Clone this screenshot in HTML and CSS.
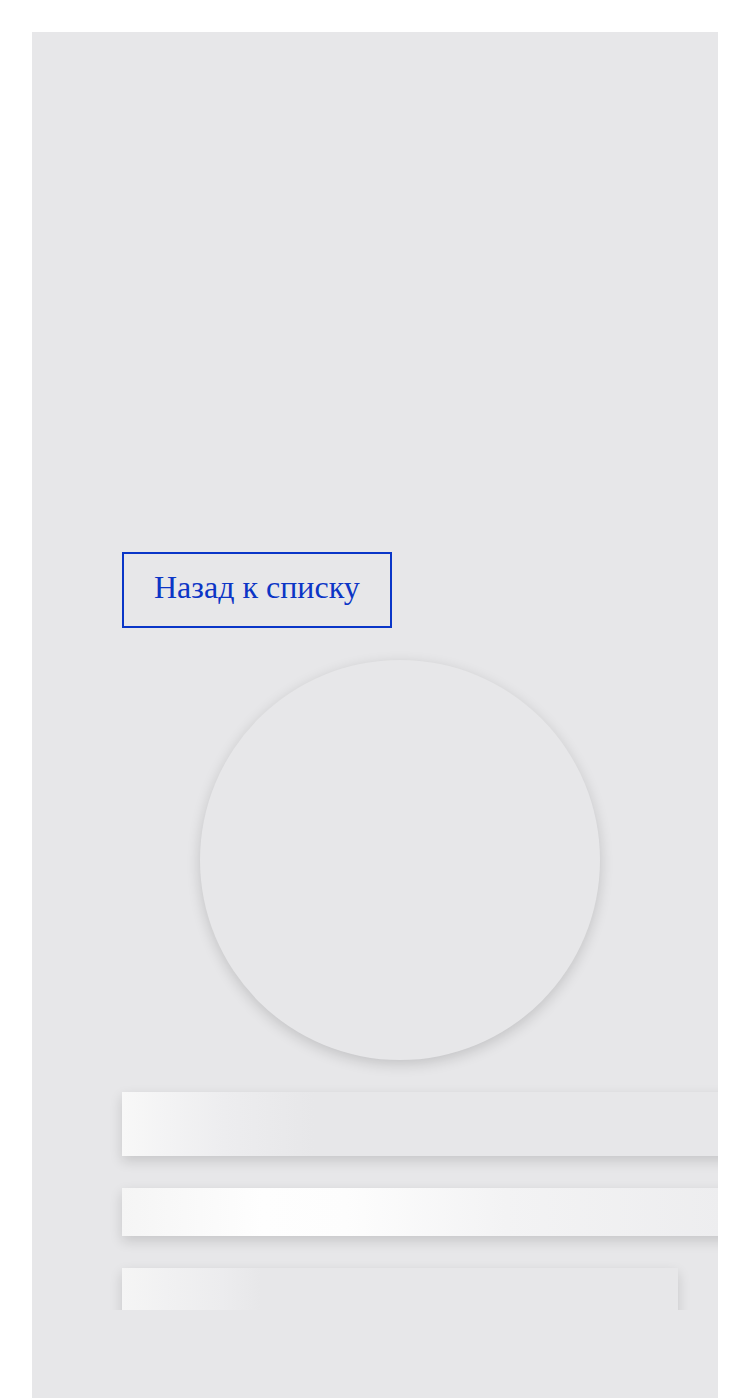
FILE: index.html
```html
<!DOCTYPE html>
<html lang="ru">
<head>
  <meta charset="UTF-8" />
  <meta name="viewport" content="width=device-width, initial-scale=1.0" />
  <title>Загрузка</title>
  <link rel="stylesheet" href="styles.css">
</head>
<body>

<div class="panel">
  <div class="viewport">
    <div class="content">
      <a class="back-link" href="#">Назад к списку</a>

      <div class="avatar"></div>

      <div class="bar bar-title"></div>
      <div class="bar bar-subtitle"></div>
      <div class="bar bar-text"></div>
    </div>
  </div>
</div>

</body>
</html>
```

FILE: styles.css
```css
*,
*::before,
*::after {
  box-sizing: border-box;
  margin: 0;
  padding: 0;
}

body {
  font-family: "Liberation Serif", "Times New Roman", serif;
  background-color: #fff;
  padding: 32px 32px 0 32px;
}

.panel {
  width: 686px;
  height: 1366px;
  background-color: #e7e7e9;
}

.viewport {
  height: 1278px;
  overflow: hidden;
}

.content {
  padding: 520px 40px 0 90px;
  display: flex;
  flex-direction: column;
  align-items: flex-start;
  gap: 32px;
}

.back-link {
  display: inline-block;
  padding: 13px 30px 19px;
  border: 2px solid #0a36c8;
  color: #0c35c6;
  font-size: 32px;
  line-height: 40px;
  text-decoration: none;
}

.avatar {
  align-self: center;
  width: 400px;
  height: 400px;
  border-radius: 50%;
  background-color: #e7e7e9;
  box-shadow: 0 4px 14px rgba(0, 0, 0, 0.16);
}

.bar {
  flex-shrink: 0;
  box-shadow: 0 5px 12px rgba(0, 0, 0, 0.14);
}

.bar-title {
  width: 640px;
  height: 64px;
  background: linear-gradient(to right, #f8f8f8 0%, #ededef 16%, #e7e7e9 30%, #e7e7e9 100%);
}

.bar-subtitle {
  width: 640px;
  height: 48px;
  background: linear-gradient(to right, #f5f5f5 0%, #fefefe 22%, #fdfdfd 35%, #f3f3f4 60%, #ececee 100%);
}

.bar-text {
  width: 556px;
  height: 64px;
  background: linear-gradient(to right, #f5f5f5 0%, #ececee 18%, #e7e7e9 25%, #e7e7e9 100%);
}
```
